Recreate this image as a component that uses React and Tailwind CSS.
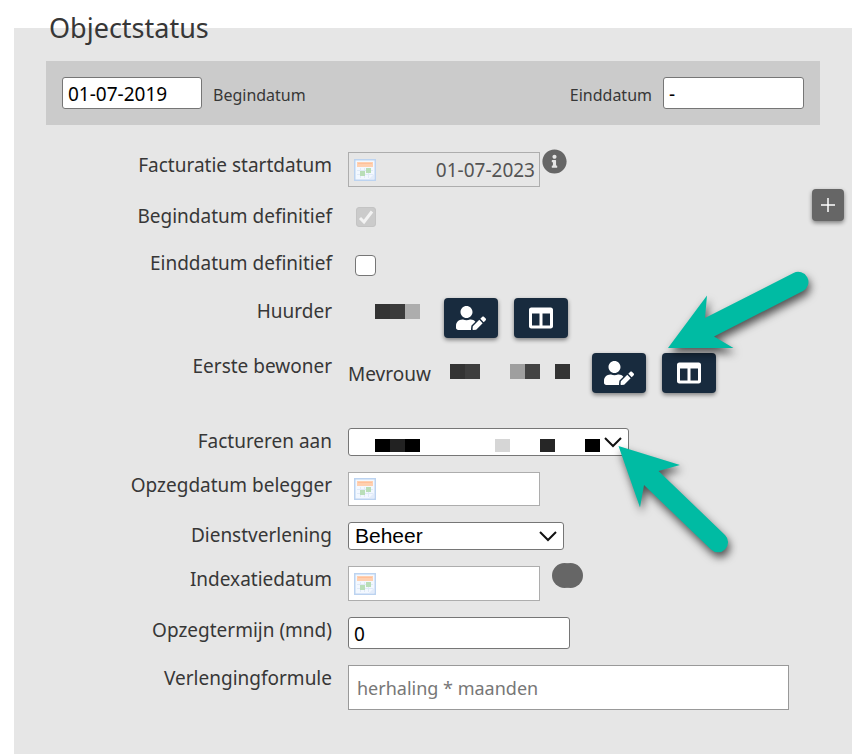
import { FaUserEdit, FaColumns, FaInfoCircle } from "react-icons/fa";

const textInput =
  "h-8 rounded-[3px] border border-[#767676] bg-white px-[5px] pt-[2px] font-['Noto_Sans',sans-serif] text-[19px] leading-6 text-black";

function Row({ label, htmlFor, children, className = "" }) {
  return (
    <div className={`grid grid-cols-[286px_minmax(0,1fr)] items-start gap-4 ${className}`}>
      {htmlFor ? (
        <label htmlFor={htmlFor} className="text-right leading-[26px]">
          {label}
        </label>
      ) : (
        <span className="text-right leading-[26px]">{label}</span>
      )}
      {children}
    </div>
  );
}

function CalendarIcon() {
  return (
    <svg width="22" height="22" viewBox="0 0 22 22" className="shrink-0" aria-hidden="true">
      <rect x="0.750" y="0.750" width="20.500" height="20.500" fill="#f3f8ff" stroke="#bcd3f0" strokeWidth="1.500" />
      <rect x="3" y="3" width="16" height="5" fill="#ffd0b0" />
      <path d="M4 4.500h14" stroke="#ffc09a" strokeWidth="1" />
      <path d="M3 11.500h16M3 15.500h16M6.500 9v10M10.500 9v10M14.500 9v10" stroke="#e0eaf8" strokeWidth="1" />
      <rect x="12" y="9" width="5" height="5" fill="#b9deb8" />
      <rect x="6" y="12" width="5" height="5" fill="#b9deb8" />
      <path d="M15 20l5-5v5z" fill="#e3ecfa" />
    </svg>
  );
}

function DateField({ id, value = "", disabled = false, className = "" }) {
  return (
    <div className={`flex w-48 items-center border border-[#adadad] pl-[5px] ${className}`}>
      <CalendarIcon />
      <input
        id={id}
        type="text"
        defaultValue={value}
        disabled={disabled}
        className="h-8 min-w-0 flex-1 bg-transparent pr-1 text-right text-[19px] text-[#545454]"
      />
    </div>
  );
}

function Chevron({ className }) {
  return (
    <svg width="18" height="11" viewBox="0 0 18 11" className={`pointer-events-none absolute top-[9px] ${className}`} aria-hidden="true">
      <path d="M1 1l8 8 8-8" fill="none" stroke="#111" strokeWidth="2" />
    </svg>
  );
}

function ActionButton({ label, children }) {
  return (
    <button
      type="button"
      aria-label={label}
      className="flex h-10 w-[54px] items-center justify-center rounded-[4px] bg-[#182b3e] text-white shadow-[0_2px_4px_rgba(0,0,0,0.45)]"
    >
      {children}
    </button>
  );
}

function PersonActions() {
  return (
    <div className="flex gap-4">
      <ActionButton label="Persoon bewerken">
        <FaUserEdit className="h-6 w-[30px]" />
      </ActionButton>
      <ActionButton label="Kolommen tonen">
        <FaColumns className="size-6" />
      </ActionButton>
    </div>
  );
}

function Arrows() {
  return (
    <svg
      width="868"
      height="754"
      viewBox="0 0 868 754"
      className="pointer-events-none absolute top-0 left-0 max-w-none"
      aria-hidden="true"
    >
      <g fill="#00bba3" className="drop-shadow-[2px_5px_4px_rgba(0,0,0,0.65)]">
        <path d="M668 348L707 295.500L705 318L793.500 273A10 10 0 0 1 803 291L714 336.500L733.500 348Z" />
        <path d="M618.500 446L680 465L658.500 471L725 535A10 10 0 0 1 711 549.500L644 485L640 507.500Z" />
      </g>
    </svg>
  );
}

export default function App() {
  return (
    <main className="relative flex min-h-screen flex-col overflow-hidden bg-white pt-[10px] pr-4 pl-[14px] font-['Noto_Sans',sans-serif] text-[19px] text-[#373737]">
      <fieldset className="relative min-w-0 flex-1 bg-[#e6e6e6] px-8 pb-11">
        <legend className="px-[3px] text-[27px] leading-9">Objectstatus</legend>

        <div className="mt-[15px] flex h-16 items-center justify-between bg-[#cbcbcb] px-4 text-base">
          <div className="flex items-center gap-[11px]">
            <input id="begin" type="text" defaultValue="01-07-2019" className={`${textInput} w-[140px]`} />
            <label htmlFor="begin" className="pt-1">Begindatum</label>
          </div>
          <div className="flex items-center gap-[11px]">
            <label htmlFor="eind" className="pt-1">Einddatum</label>
            <input id="eind" type="text" defaultValue="-" className={`${textInput} w-[141px]`} />
          </div>
        </div>

        <div className="mt-[27px] flex flex-col gap-4">
          <Row label="Facturatie startdatum" htmlFor="start">
            <div className="flex h-[35px] items-start gap-[2px]">
              <DateField id="start" value="01-07-2023" disabled className="h-[35px]" />
              <FaInfoCircle className="-mt-[3px] size-[25px] text-[#666]" />
            </div>
          </Row>

          <Row label="Begindatum definitief" htmlFor="begin-def" className="h-[31px]">
            <div className="relative mt-1 ml-2 size-5">
              <input
                id="begin-def"
                type="checkbox"
                defaultChecked
                disabled
                className="block size-5 appearance-none rounded-[3px] border border-[#c4c4c4] bg-[#cbcbcb]"
              />
              <svg viewBox="0 0 20 20" className="pointer-events-none absolute inset-0 size-5" aria-hidden="true">
                <path d="M4 11l4 4 8-10.500" fill="none" stroke="#f3f3f3" strokeWidth="3" />
              </svg>
            </div>
          </Row>

          <Row label="Einddatum definitief" htmlFor="eind-def" className="h-8">
            <input
              id="eind-def"
              type="checkbox"
              className="mt-[5px] ml-[7px] size-[21px] appearance-none rounded-[4px] border border-[#767676] bg-white"
            />
          </Row>

          <Row label="Huurder" className="h-[39px]">
            <div className="flex">
              <div className="mt-[6px] mr-6 ml-[27px] flex" aria-hidden="true">
                <i className="size-[15px] bg-[#333]" />
                <i className="size-[15px] bg-[#3b3b3b]" />
                <i className="size-[15px] bg-[#adadad]" />
              </div>
              <PersonActions />
            </div>
          </Row>

          <Row label="Eerste bewoner" className="h-[59px]">
            <div className="flex">
              <span className="mt-2 w-[102px] leading-[26px]">Mevrouw</span>
              <div className="mt-[11px] mr-[22px] flex" aria-hidden="true">
                <i className="size-[15px] bg-[#333]" />
                <i className="size-[15px] bg-[#3e3e3e]" />
                <i className="ml-[30px] size-[15px] bg-[#9f9f9f]" />
                <i className="size-[15px] bg-[#434343]" />
                <i className="ml-[15px] size-[15px] bg-[#333]" />
              </div>
              <PersonActions />
            </div>
          </Row>

          <Row label="Factureren aan" htmlFor="factuur">
            <div className="relative w-[281px]">
              <select id="factuur" className="block h-7 w-full appearance-none rounded-[3px] border border-[#767676] bg-white" />
              <div className="pointer-events-none absolute top-[11px] left-[27px] flex" aria-hidden="true">
                <i className="h-[13px] w-[15px] bg-black" />
                <i className="h-[13px] w-[15px] bg-[#222]" />
                <i className="h-[13px] w-[15px] bg-black" />
                <i className="ml-[75px] h-[13px] w-[15px] bg-[#d6d6d6]" />
                <i className="ml-[30px] h-[13px] w-[15px] bg-[#262626]" />
                <i className="ml-[30px] h-[13px] w-[15px] bg-black" />
              </div>
              <Chevron className="right-[7px]" />
            </div>
          </Row>

          <Row label="Opzegdatum belegger" htmlFor="opzeg">
            <DateField id="opzeg" className="h-[34px] bg-white" />
          </Row>

          <Row label="Dienstverlening" htmlFor="dienst">
            <div className="relative w-[216px]">
              <select
                id="dienst"
                className="block h-7 w-full appearance-none rounded-[3px] border border-[#767676] bg-white px-[6px] font-['Liberation_Sans',Arial,sans-serif] text-[21px] leading-6 text-black"
              >
                <option>Beheer</option>
              </select>
              <Chevron className="right-[7px]" />
            </div>
          </Row>

          <Row label="Indexatiedatum" htmlFor="index">
            <div className="flex h-[35px] items-start gap-3">
              <DateField id="index" className="h-[35px] bg-white" />
              <span className="-mt-[3px] flex" aria-hidden="true">
                <i className="size-[25px] rounded-full bg-[#666]" />
                <i className="-ml-[19px] size-[25px] rounded-full bg-[#666]" />
              </span>
            </div>
          </Row>

          <Row label="Opzegtermijn (mnd)" htmlFor="termijn">
            <input id="termijn" type="text" defaultValue="0" className={`${textInput} w-[222px]`} />
          </Row>

          <Row label="Verlengingformule" htmlFor="formule">
            <input
              id="formule"
              type="text"
              placeholder="herhaling * maanden"
              className="h-[45px] w-full max-w-[441px] border border-[#999] bg-white px-2 text-lg placeholder:text-[#777]"
            />
          </Row>
        </div>

        <button
          type="button"
          aria-label="Toevoegen"
          className="absolute top-[143px] right-2 flex size-8 items-center justify-center rounded-[4px] bg-[#666] text-white shadow-[0_2px_4px_rgba(0,0,0,0.45)]"
        >
          <svg width="14" height="14" viewBox="0 0 14 14" aria-hidden="true">
            <path d="M7 0v14M0 7h14" stroke="currentColor" strokeWidth="1.500" />
          </svg>
        </button>
      </fieldset>
      <Arrows />
    </main>
  );
}
